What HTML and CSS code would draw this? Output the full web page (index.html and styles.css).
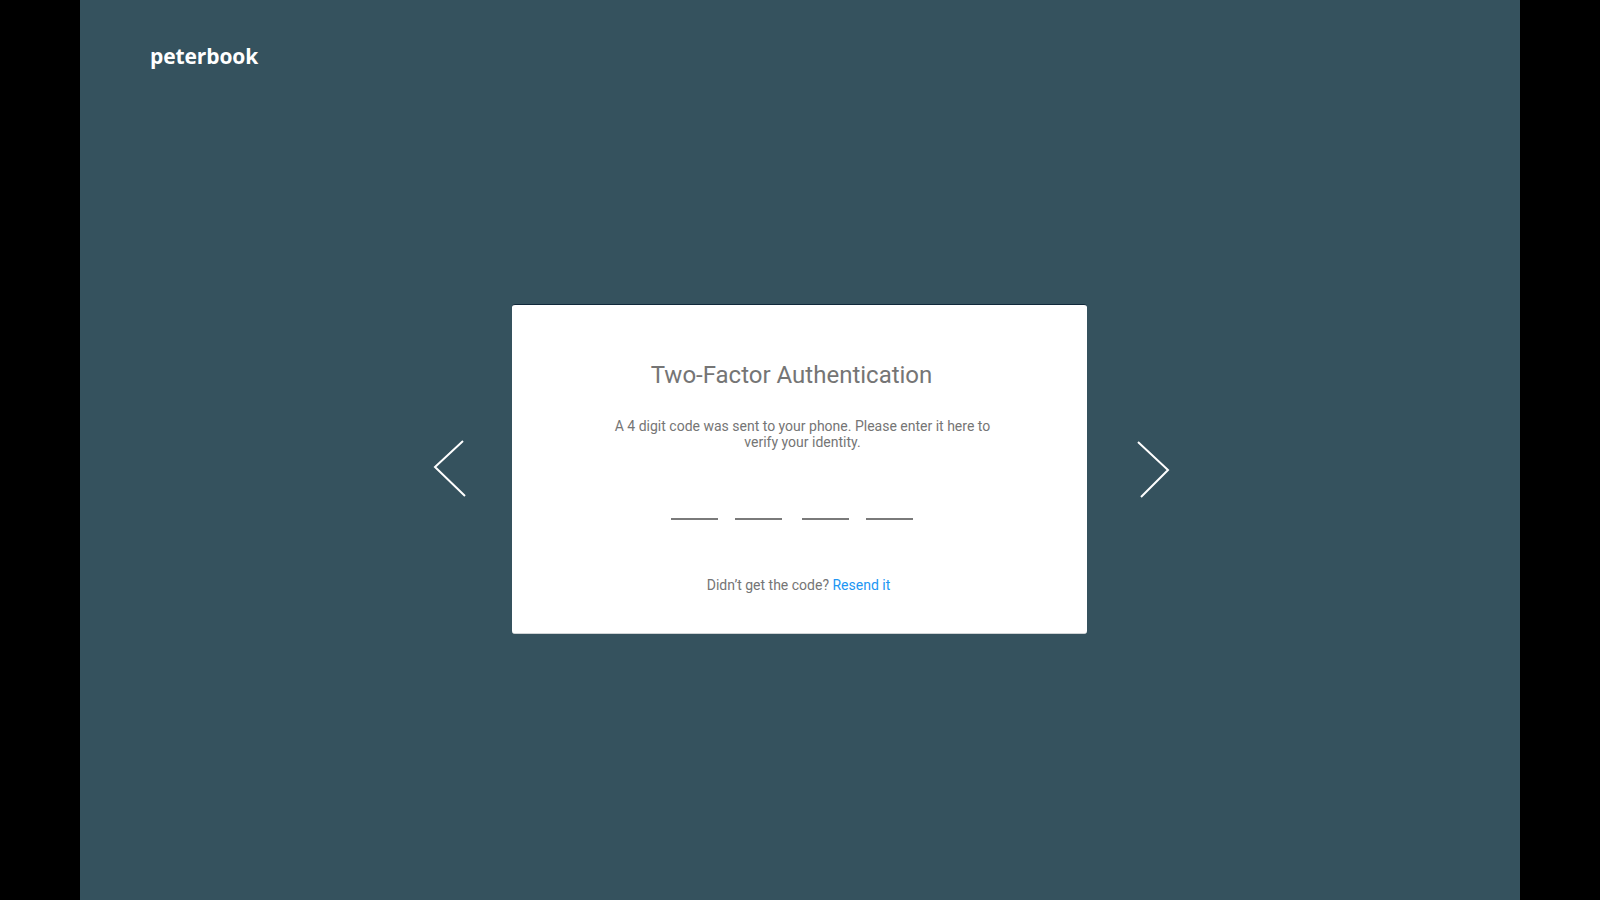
FILE: index.html
```html
<!DOCTYPE html>
<html lang="en">
<head>
<meta charset="utf-8">
<title>peterbook – Two-Factor Authentication</title>
<link rel="stylesheet" href="styles.css">
</head>
<body>
<div class="stage">
  <header class="header">
    <div class="logo">peterbook</div>
  </header>
  <main class="carousel">
    <button class="nav nav-prev" aria-label="Previous">
      <svg width="40" height="60" viewBox="0 0 40 60"><polyline points="33,2 5,28 35,57" fill="none" stroke="#fff" stroke-width="2"/></svg>
    </button>
    <section class="card">
      <h1 class="title">Two-Factor Authentication</h1>
      <p class="desc">A 4 digit code was sent to your phone. Please enter it here to<br>verify your identity.</p>
      <div class="code">
        <span class="digit"></span>
        <span class="digit wide-gap"></span>
        <span class="digit"></span>
        <span class="digit"></span>
      </div>
      <p class="resend">Didn’t get the code? <a href="#" class="link">Resend it</a></p>
    </section>
    <button class="nav nav-next" aria-label="Next">
      <svg width="40" height="60" viewBox="0 0 40 60"><polyline points="8,3 38,31 11,58" fill="none" stroke="#fff" stroke-width="2"/></svg>
    </button>
  </main>
</div>
</body>
</html>
```
FILE: styles.css
```css
* { box-sizing: border-box; }
html, body { margin: 0; padding: 0; background: #000; }
body { font-family: Roboto, "Liberation Sans", sans-serif; }

.stage {
  width: 1440px;
  height: 900px;
  margin: 0 auto;
  background: #35525e;
  display: flex;
  flex-direction: column;
}

.header {
  padding: 43px 70px 0;
}
.logo {
  font-family: "Open Sans", Roboto, sans-serif;
  font-weight: 700;
  font-size: 21px;
  line-height: 26px;
  color: #fff;
  letter-spacing: -0.1px;
}

.carousel {
  margin-top: 235px;
  display: flex;
  justify-content: center;
  align-items: center;
}

.nav {
  background: none;
  border: 0;
  padding: 0;
  width: 40px;
  height: 60px;
  cursor: pointer;
  display: block;
}
.nav svg { display: block; }
.nav-prev { margin-right: 42px; }
.nav-next { margin-left: 43px; }

.card {
  width: 575px;
  height: 330px;
  background: #fff;
  border-radius: 3px;
  border-top: 1px solid #10283a;
  border-bottom: 1px solid #cfd3d5;
  padding-top: 56px;
  text-align: center;
  display: flex;
  flex-direction: column;
  align-items: center;
}

.title {
  margin: 0;
  padding-right: 16px;
  font-size: 24px;
  line-height: 28px;
  font-weight: 400;
  color: #757575;
}

.desc {
  margin: 29px 0 0;
  padding-left: 6px;
  font-size: 14px;
  line-height: 16px;
  color: #757575;
}

.code {
  margin-top: 40px;
  padding-right: 16px;
  display: flex;
  gap: 17px;
}
.digit {
  display: block;
  width: 47px;
  height: 30px;
  border-bottom: 2px solid #7a7a7a;
}
.digit.wide-gap { margin-right: 3px; }

.resend {
  margin: 57px 0 0;
  padding-right: 2px;
  font-size: 14px;
  line-height: 16px;
  color: #757575;
}
.link {
  color: #2196f3;
  text-decoration: none;
}
```
